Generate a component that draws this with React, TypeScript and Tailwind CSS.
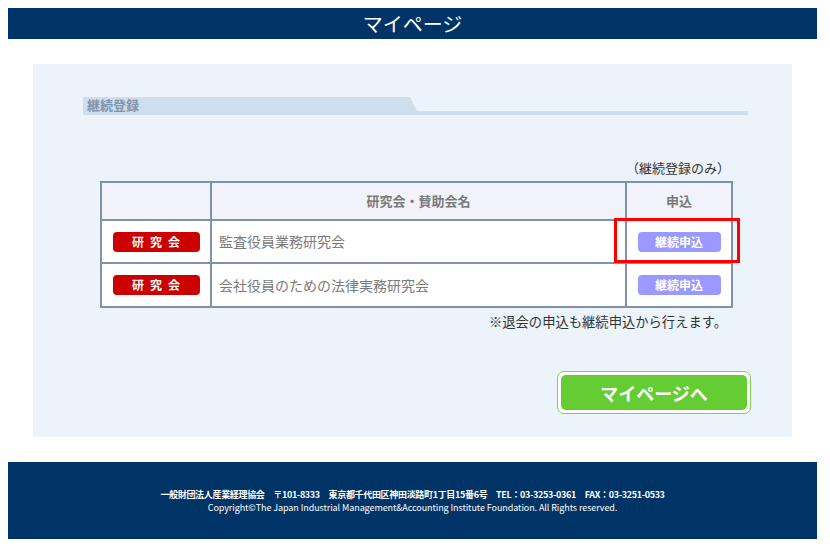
import React from "react";

const jp = { fontFamily: '"Noto Sans CJK JP", "Noto Sans", sans-serif' };

function Badge() {
  return (
    <div className="mx-auto flex h-[20px] w-[87px] items-center justify-center rounded-[4px] bg-[#cc0000] text-[12px] font-bold leading-none tracking-[6px] text-white">
      <span className="pl-[6px]">研究会</span>
    </div>
  );
}

function ApplyBtn() {
  return (
    <div className="mx-auto flex h-[20px] w-[83px] items-center justify-center rounded-[4px] bg-[#9999ff] text-[12px] font-bold leading-none text-white">
      継続申込
    </div>
  );
}

export default function App() {
  const rows = ["監査役員業務研究会", "会社役員のための法律実務研究会"];
  return (
    <div className="min-h-[552px] bg-white" style={jp}>
      <div className="ml-2 w-[809px] pt-2">
        <header className="flex h-[31px] items-center justify-center bg-[#003366] text-[20px] leading-none text-white">
          マイページ
        </header>

        <main className="mx-[25px] mt-[25px] h-[373px] bg-[#ecf3fb] pl-[50px] pt-[33px]">
          {/* section heading */}
          <div className="relative h-[18px] w-[665px]">
            <div className="absolute bottom-0 left-0 h-[4px] w-full bg-[#cfdeed]" />
            <div
              className="absolute left-0 top-0 h-[18px] w-[336px] bg-[#cfdeed]"
              style={{ clipPath: "polygon(0 0, 327px 0, 336px 100%, 0 100%)" }}
            />
            <span className="relative block pl-[4px] text-[13px] font-bold leading-[16px] text-[#7f94ad]">
              継続登録
            </span>
          </div>

          <div className="ml-[17px] w-[631px]">
            <div className="mt-[44px] pr-[1px] text-right text-[13px] leading-[18px] text-[#333333]">
              （継続登録のみ）
            </div>

            <div className="relative mt-[4px]">
              <table className="w-[631px] table-fixed border-collapse border-2 border-[#7f92ab]">
                <colgroup>
                  <col className="w-[110px]" />
                  <col className="w-[415px]" />
                  <col className="w-[106px]" />
                </colgroup>
                <thead>
                  <tr className="h-[38px] bg-[#f1f2fa]">
                    <th className="border-2 border-[#7f92ab]" />
                    <th className="border-2 border-[#7f92ab] text-center text-[13px] font-bold text-[#7a7a7a]">
                      研究会・賛助会名
                    </th>
                    <th className="border-2 border-[#7f92ab] text-center text-[13px] font-bold text-[#7a7a7a]">
                      申込
                    </th>
                  </tr>
                </thead>
                <tbody>
                  {rows.map((name, i) => (
                    <tr key={i} className={i === 0 ? "h-[43px] bg-white" : "h-[44px] bg-white"}>
                      <td className="border-2 border-[#7f92ab]">
                        <Badge />
                      </td>
                      <td className="border-2 border-[#7f92ab] pl-[7px] text-[14px] text-[#7a7a7a]">
                        {name}
                      </td>
                      <td className="border-2 border-[#7f92ab]">
                        <ApplyBtn />
                      </td>
                    </tr>
                  ))}
                </tbody>
              </table>
              {/* red highlight annotation */}
              <div className="absolute left-[514px] top-[37px] h-[45px] w-[126px] border-[3px] border-[#ff0000]" />
            </div>

            <div className="mt-[5px] pr-[4px] text-right text-[13.3px] leading-[18px] text-[#333333]">
              ※退会の申込も継続申込から行えます。
            </div>

            <div className="mt-[40px] flex justify-end">
              <div className="mr-[-20px] rounded-[7px] border border-[#7fd34f] bg-white p-[3px]">
                <div className="flex h-[35px] w-[186px] items-center justify-center rounded-[5px] bg-[#66cc33] text-[18px] font-bold leading-none text-white">
                  マイページへ
                </div>
              </div>
            </div>
          </div>
        </main>

        <footer className="mt-[25px] flex h-[77px] flex-col items-center justify-center bg-[#003366] text-white">
          <div className="text-[9px] font-bold leading-[13px] tracking-[-0.32px]">
            一般財団法人産業経理協会　〒101-8333　東京都千代田区神田淡路町1丁目15番6号　TEL：03-3253-0361　FAX：03-3251-0533
          </div>
          <div className="text-[9px] leading-[13px] tracking-[-0.08px]">
            Copyright©The Japan Industrial Management&amp;Accounting Institute Foundation. All Rights reserved.
          </div>
        </footer>
      </div>
    </div>
  );
}
